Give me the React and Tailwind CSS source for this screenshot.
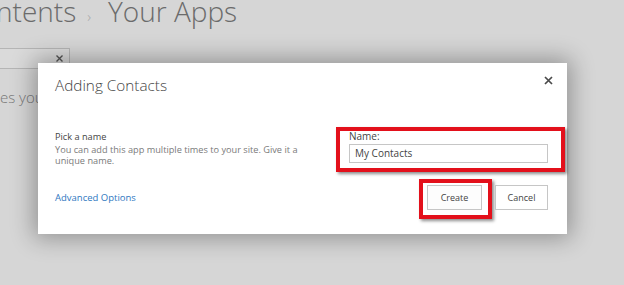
export default function App() {
  return (
    <div className="relative w-[624px] h-[285px] overflow-hidden bg-[#d6d6d6] font-['Open_Sans',sans-serif]">
      {/* page behind the dialog */}
      <div className="-mt-[5px] -ml-[4px] flex items-baseline h-[32px] leading-[32px] text-[28px] font-light text-[#6b6b6b]">
        <span>ntents</span>
        <span className="ml-[11px] text-[15px] text-[#a8a8a8]">›</span>
        <span className="ml-[17px]">Your Apps</span>
      </div>
      <div className="mt-[21px] w-[70px] h-[21px] border-t border-r border-b border-[#b5b5b5] bg-[#dadada] flex items-center justify-end pr-[6px]">
        <svg width="7" height="7" viewBox="0 0 7 7" className="block">
          <path d="M0.5 0.5 L6.5 6.5 M6.5 0.5 L0.5 6.5" stroke="#555" strokeWidth="1.4" />
        </svg>
      </div>
      <div className="mt-[18px] h-[20px] leading-[20px] text-[15px] font-light text-[#777]">es you</div>

      {/* modal dialog */}
      <div className="absolute left-[38px] top-[63px] w-[529px] h-[171px] bg-white shadow-[0_0_22px_4px_rgba(0,0,0,0.32)]">
        <button className="absolute right-[14px] top-[13px] w-[9px] h-[9px] flex items-center justify-center">
          <svg width="9" height="9" viewBox="0 0 9 9" className="block">
            <path d="M1 1 L8 8 M8 1 L1 8" stroke="#4a4a4a" strokeWidth="1.7" />
          </svg>
        </button>
        <div className="pt-[12px] pl-[17px] h-[32px] leading-[20px] text-[15.3px] font-light text-[#444]">Adding Contacts</div>

        <div className="mt-[32px] flex">
          <div className="flex-1 pl-[17px] pt-[4px]">
            <div className="text-[9.2px] leading-[12px] text-[#444]">Pick a name</div>
            <div className="mt-[1px] w-[250px] text-[9.2px] leading-[11px] text-[#7a7a7a]">
              You can add this app multiple times to your site. Give it a unique name.
            </div>
          </div>
          <div className="w-[229px] mr-[2px] border-[4px] border-[#e3101b] shadow-[2px_2px_3px_rgba(0,0,0,0.45)] pl-[9px] pr-[13px] pb-[5px]">
            <div className="h-[10px] leading-[10px] text-[10px] text-[#444]">Name:</div>
            <div className="mt-[3px] h-[19px] border border-[#c6c6c6] flex items-center pl-[5px] text-[10px] text-[#444]">
              My Contacts
            </div>
          </div>
        </div>

        <div className="mt-[7px] flex items-start pl-[17px] pr-[19px]">
          <a className="mt-[13px] text-[9.5px] leading-[12px] text-[#2f78bf]">Advanced Options</a>
          <div className="ml-auto border-[4px] border-[#e3101b] shadow-[2px_2px_3px_rgba(0,0,0,0.45)] pl-[4px] pr-[6px] pt-[2px] pb-[5px]">
            <button className="block w-[55px] h-[25px] border border-[#c6c6c6] bg-[#fdfdfd] text-[9px] text-[#444]">Create</button>
          </div>
          <button className="ml-[3px] mt-[6px] w-[53px] h-[25px] border border-[#c6c6c6] bg-white text-[9px] text-[#444]">Cancel</button>
        </div>
      </div>
    </div>
  );
}
